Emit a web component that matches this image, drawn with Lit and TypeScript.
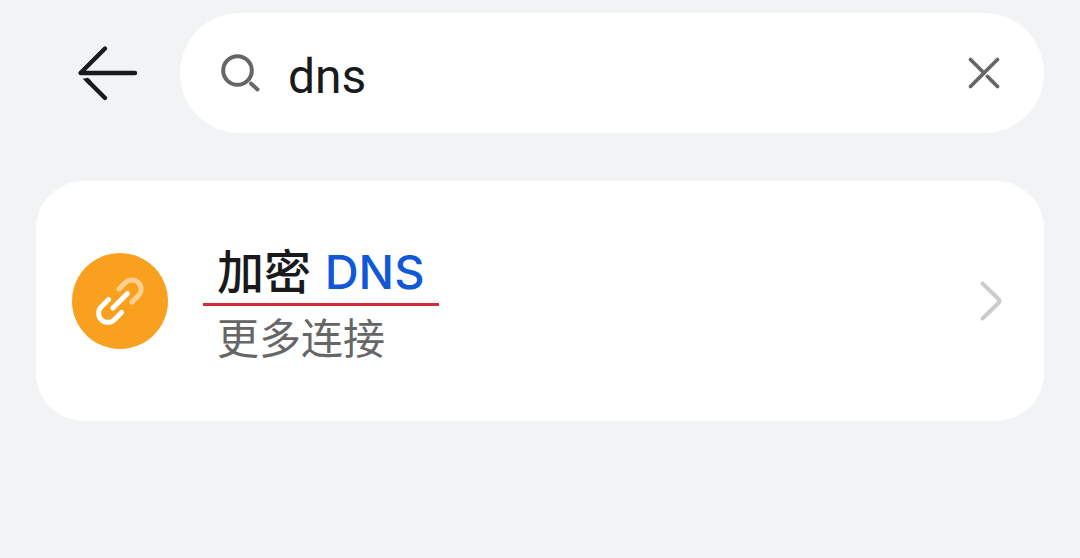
import { LitElement, html, css } from "lit";
import { customElement, state } from "lit/decorators.js";

@customElement("app-root")
export class AppRoot extends LitElement {
  static styles = css`
    :host {
      display: block;
      min-height: 100vh;
      box-sizing: border-box;
      padding: 13px 36px;
      background: #f2f3f5;
      color: #191a1c;
      font-family: Roboto, "Noto Sans CJK SC", sans-serif;
    }
    svg {
      display: block;
      fill: none;
      stroke: currentColor;
      stroke-linecap: round;
      stroke-linejoin: round;
    }
    button {
      display: block;
      flex: none;
      padding: 0;
      border: 0;
      background: none;
      color: inherit;
      cursor: pointer;
    }
    .bar {
      display: flex;
      align-items: center;
      gap: 36px;
      padding-left: 36px;
    }
    .search {
      flex: 1;
      min-width: 0;
      height: 120px;
      box-sizing: border-box;
      display: flex;
      align-items: center;
      gap: 24px;
      padding: 0 36px;
      border-radius: 60px;
      background: #fff;
    }
    .glyph {
      flex: none;
      color: #666;
    }
    .field {
      flex: 1;
      min-width: 0;
      height: 64px;
      padding: 6px 0 0;
      box-sizing: border-box;
      border: 0;
      outline: none;
      background: none;
      color: inherit;
      font: inherit;
      font-size: 48px;
    }
    .results {
      margin: 48px 0 0;
      padding: 0;
      list-style: none;
      border-radius: 48px;
      background: #fff;
    }
    .row {
      display: flex;
      align-items: center;
      gap: 35px;
      min-height: 240px;
      box-sizing: border-box;
      padding: 0 36px;
      color: inherit;
      text-decoration: none;
    }
    .badge {
      flex: none;
      border-radius: 50%;
      background: #f9a01e;
      color: #fff;
    }
    .text {
      flex: 1;
      min-width: 0;
      display: flex;
      flex-direction: column;
      align-items: flex-start;
      gap: 4px;
    }
    .title {
      padding: 10px 14px 0;
      border-bottom: 3px solid #d02c3a;
      font-size: 47px;
      font-weight: 500;
      line-height: 60px;
    }
    .match {
      padding-left: 2px;
      color: #0f58d8;
      font-family: Inter, sans-serif;
    }
    .sub {
      padding: 0 14px;
      color: #666;
      font-size: 42px;
      line-height: 60px;
    }
    .chevron {
      flex: none;
      color: #ccc;
    }
  `;

  @state() private query = "dns";

  render() {
    return html`
      <header class="bar">
        <button aria-label="返回">
          <svg width="72" height="72" viewBox="0 0 72 72" stroke-width="4.400">
            <path d="M33 11.500L8.500 36H63" />
            <path d="M33 61L15 43" />
            <path d="M10.500 41.500H17L20 45L17 48Z" fill="currentColor" stroke="none" />
          </svg>
        </button>
        <div class="search" role="search">
          <svg class="glyph" width="48" height="48" viewBox="0 0 48 48" stroke-width="4">
            <circle cx="21.500" cy="21.500" r="14.300" />
            <path d="M35 34.500L41.500 40.500" />
          </svg>
          <input
            class="field"
            type="text"
            aria-label="搜索"
            .value=${this.query}
            @input=${(e: Event) => (this.query = (e.target as HTMLInputElement).value)}
          />
          <button class="glyph" aria-label="清除" @click=${() => (this.query = "")}>
            <svg width="48" height="48" viewBox="0 0 48 48" stroke-width="3.800">
              <path d="M10.500 10.500L24 24" />
              <path d="M37.500 10.500L10.500 37.500" />
              <path d="M27.500 27.500L37.500 37.500" />
            </svg>
          </button>
        </div>
      </header>
      <ul class="results">
        <li>
          <a class="row" href="#dns">
            <svg class="badge" width="96" height="96" viewBox="0 0 96 96" stroke-width="5">
              <g transform="translate(48 48) rotate(-45)">
                <path d="M7.500 -9.200H16.800A9.200 9.200 0 0 1 16.800 9.200H7.500" opacity="0.500" />
                <path d="M-7 -9.200H-17.200A9.200 9.200 0 0 0 -17.200 9.200H-7" />
                <path d="M-10 0H10.500" />
              </g>
            </svg>
            <span class="text">
              <span class="title">加密 <span class="match">DNS</span></span>
              <span class="sub">更多连接</span>
            </span>
            <svg class="chevron" width="36" height="48" viewBox="0 0 36 48" stroke-width="4">
              <path d="M10.500 6.500L26.500 22Q28.500 24 26.500 26L10.500 41.500" />
            </svg>
          </a>
        </li>
      </ul>
    `;
  }
}
